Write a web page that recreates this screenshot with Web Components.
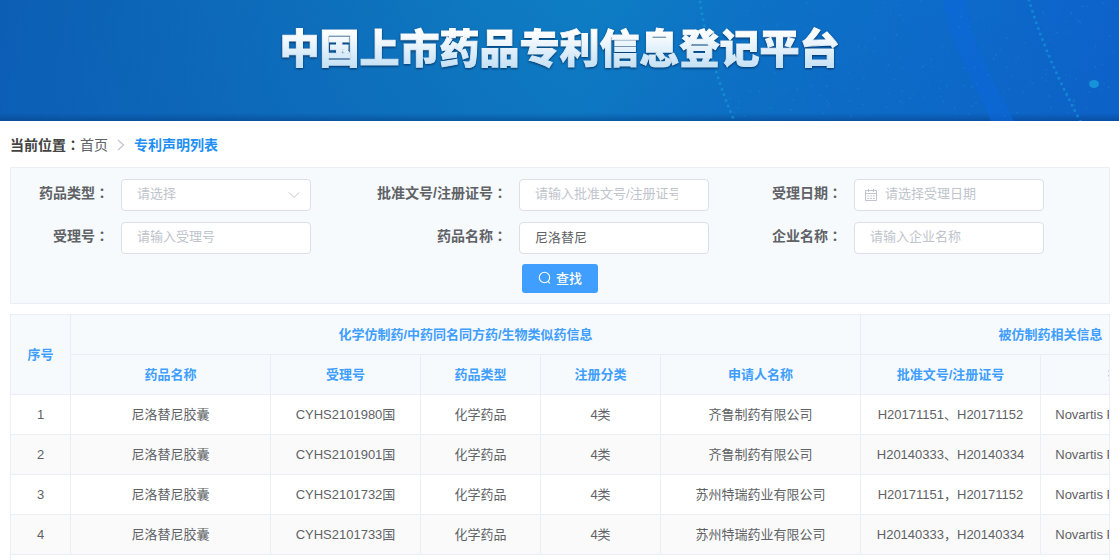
<!DOCTYPE html>
<html lang="zh-CN">
<head>
<meta charset="utf-8">
<title>中国上市药品专利信息登记平台</title>
<style>
  body {
    margin: 0;
    background: #fff;
    color: #606266;
    font-family: "Liberation Sans", "Noto Sans CJK SC", sans-serif;
    font-size: 13px;
  }
</style>
</head>
<body>
<patent-page></patent-page>

<script>
const define = (name, html, setup) => {
  const template = document.createElement('template');
  template.innerHTML = html.trim();
  customElements.define(name, class extends HTMLElement {
    constructor() {
      super();
      this.attachShadow({ mode: 'open' }).append(template.content.cloneNode(true));
    }
    connectedCallback() {
      if (setup && !this.ready) { this.ready = true; setup(this, this.shadowRoot); }
    }
  });
};

// Full-width colon, centred in its em box
define('wide-colon', `
  <style>:host { display: inline; font-family: "Noto Sans CJK TC", sans-serif; line-height: 1; }</style><span lang="zh-TW">：</span>`);

define('site-banner', `
  <style>
    :host {
      display: flex; justify-content: center; position: relative; overflow: hidden;
      height: 121px; flex: none;
      background:
        linear-gradient(to top, rgba(5,60,130,.5), rgba(5,60,130,0) 8px),
        linear-gradient(to bottom, rgba(12,100,185,0), rgba(12,95,185,.22)),
        linear-gradient(98deg, #0c5eb4 0%, #0d6bba 22%, #0e78c0 42%, #0e7dc4 52%, #0d71c6 68%, #0d6aca 85%, #0d62cb 100%);
    }
    svg { position: absolute; inset: 0; width: 100%; height: 100%; }
    h1 {
      margin: 0; padding-top: 16px; position: relative;
      font: 900 40px/60px "Noto Sans CJK SC", sans-serif;
      white-space: nowrap; height: 60px;
      color: transparent; -webkit-text-stroke: 1px transparent;
      background: linear-gradient(#fff 30px, #f5fafe 38px, #c3e0f4 68px);
      -webkit-background-clip: text; background-clip: text;
      filter: drop-shadow(0 1px 1px rgba(0,35,75,.8));
    }
  </style>
  <svg viewBox="0 0 1119 121" preserveAspectRatio="xMidYMid slice" aria-hidden="true">
    <path d="M943 0H965C971 44 996 85 1014 121H991C974 82 949 40 943 0Z" fill="#0c68da" opacity=".6"/>
    <g fill="none" stroke="#18a0dc" stroke-width="3" stroke-linecap="round" opacity=".55">
      <path d="M700 2Q710 65 736 125" stroke-dasharray="0 6"/>
      <path d="M1029 0Q1046 58 1083 126" stroke-dasharray="0 6"/>
    </g>
    <ellipse cx="1094" cy="84" rx="5" ry="4" fill="#179bdc" opacity=".85"/>
    <g id="specks" fill="#2a9ae4"></g>
  </svg>
  <h1><slot></slot></h1>`,
(host, root) => {
  // Faint star dust over the right half of the banner
  let seed = 7, dots = '';
  const next = () => (seed = seed * 16807 % 2147483647) / 2147483647;
  for (let i = 0; i < 260; i++) {
    const x = 730 + next() * 389, y = next() * 118;
    dots += `<circle cx="${x.toFixed(1)}" cy="${y.toFixed(1)}" r="1" opacity="${(0.06 + next() * 0.2).toFixed(2)}"/>`;
  }
  root.getElementById('specks').innerHTML = dots;
});

define('bread-crumb', `
  <style>
    :host { display: flex; align-items: center; font-size: 14px; line-height: 20px; padding: 14px 0 12px; }
    b { color: #444; }
    a { color: inherit; text-decoration: none; }
    a[aria-current] { color: #1e90f5; font-weight: 700; }
    svg { width: 8px; height: 12px; margin: 0 9px; }
  </style>
  <b>当前位置<wide-colon></wide-colon></b>
  <a href="#">首页</a>
  <svg viewBox="0 0 8 12" fill="none" stroke="#c0c4cc" stroke-width="1.2" aria-hidden="true"><path d="M1 1L6.500 6L1 11"/></svg>
  <a href="#" aria-current="page">专利声明列表</a>`);

define('form-field', `
  <style>
    :host { display: flex; align-items: center; }
    label {
      flex: none; box-sizing: border-box; width: var(--label-width, 110px); padding: 0 12px 4px 0;
      text-align: right; font-size: 14px; font-weight: 700; line-height: 28px; white-space: nowrap;
    }
    .box { position: relative; flex: none; width: 190px; }
    input, select {
      display: block; box-sizing: border-box; width: 100%; height: 32px; margin: 0;
      padding: 0 30px 3px 15px; border: 1px solid #dcdfe6; border-radius: 4px;
      background: #fff; color: #606266; font: inherit; font-size: 13px; outline: none; appearance: none;
    }
    select { color: #c0c4cc; }
    input::placeholder { color: #c0c4cc; opacity: 1; }
    .date input { padding-left: 30px; }
    svg { position: absolute; top: 0; bottom: 0; margin: auto 0; pointer-events: none; fill: none; stroke: #c0c4cc; }
    .arrow { right: 11px; width: 12px; height: 8px; }
    .calendar { left: 11px; width: 12px; height: 12px; }
  </style>
  <label for="control"></label>
  <div class="box"></div>`,
(host, root) => {
  const kind = host.getAttribute('kind') || 'text';
  const hint = host.getAttribute('hint') || '';
  const label = root.querySelector('label');
  label.append(host.getAttribute('label'), document.createElement('wide-colon'));
  const box = root.querySelector('.box');
  box.classList.add(kind);
  box.innerHTML = kind === 'select'
    ? `<select id="control"><option>${hint}</option></select>
       <svg class="arrow" viewBox="0 0 12 8"><path d="M1 1.500L6 6.500L11 1.500"/></svg>`
    : `<input id="control" type="text" placeholder="${hint}" value="${host.getAttribute('value') || ''}">`;
  if (kind === 'date') box.insertAdjacentHTML('beforeend',
    `<svg class="calendar" viewBox="0 0 12 12">
       <path d="M.5 1.500H11.500V11.500H.5ZM.5 4.500H11.500M3.500 0V3M8.500 0V3"/>
       <path d="M2.500 7H10M2.500 9.500H10" stroke-dasharray="1.800 .9"/>
     </svg>`);
});

define('search-panel', `
  <style>
    :host { display: block; border: 1px solid #ebeef5; background: #f6fafd; padding: 11px 0 10px; }
    form { display: grid; grid-template-columns: repeat(3, 1fr); row-gap: 11px; margin: 0; }
    .middle { --label-width: 142px; }
    .last { --label-width: 111px; }
    footer { display: flex; justify-content: center; padding-top: 10px; }
    button {
      display: flex; align-items: center; justify-content: center; gap: 5px;
      width: 76px; height: 29px; padding: 0 0 2px; border: 0; border-radius: 3px;
      background: #409eff; color: #fff; font: inherit; font-size: 13px; font-weight: 500;
    }
    svg { width: 13px; height: 13px; fill: none; stroke: #fff; stroke-width: 1.1; }
  </style>
  <form id="search">
    <form-field kind="select" label="药品类型" hint="请选择"></form-field>
    <form-field class="middle" label="批准文号/注册证号" hint="请输入批准文号/注册证号"></form-field>
    <form-field class="last" kind="date" label="受理日期" hint="请选择受理日期"></form-field>
    <form-field label="受理号" hint="请输入受理号"></form-field>
    <form-field class="middle" label="药品名称" hint="请输入药品名称" value="尼洛替尼"></form-field>
    <form-field class="last" label="企业名称" hint="请输入企业名称"></form-field>
  </form>
  <footer>
    <button type="button">
      <svg viewBox="0 0 13 13" aria-hidden="true"><circle cx="6.500" cy="6.500" r="5.200"/><path d="M10 10.300L12 12.500"/></svg>查找
    </button>
  </footer>`);

define('patent-table', `
  <style>
    :host { display: block; overflow: hidden; border: 1px solid #ebeef5; border-bottom: 0; }
    table { table-layout: fixed; width: 1230px; border-collapse: separate; border-spacing: 0; }
    .no { width: 60px; } .wide { width: 200px; } .code { width: 150px; } .kind { width: 120px; } .licence { width: 180px; }
    th, td {
      box-sizing: border-box; height: 40px; padding: 0 10px 1px; text-align: center; white-space: nowrap;
      border-right: 1px solid #ebeef5; border-bottom: 1px solid #ebeef5; line-height: 23px;
    }
    th { background: #f6fafd; color: #409eff; font-weight: 700; }
    tbody tr:nth-child(even) { background: #fafafa; }
  </style>
  <table>
    <colgroup><col class="no"><col class="wide"><col class="code"><col class="kind"><col class="kind"><col class="wide"><col class="licence"><col class="wide"></colgroup>
    <thead>
      <tr><th rowspan="2">序号</th><th colspan="5">化学仿制药/中药同名同方药/生物类似药信息</th><th colspan="2">被仿制药相关信息</th></tr>
      <tr><th>药品名称</th><th>受理号</th><th>药品类型</th><th>注册分类</th><th>申请人名称</th><th>批准文号/注册证号</th><th>持有人名称</th></tr>
    </thead>
    <tbody></tbody>
  </table>`,
(host, root) => {
  const rows = [
    ['CYHS2101980国', '齐鲁制药有限公司', 'H20171151、H20171152'],
    ['CYHS2101901国', '齐鲁制药有限公司', 'H20140333、H20140334'],
    ['CYHS2101732国', '苏州特瑞药业有限公司', 'H20171151，H20171152'],
    ['CYHS2101733国', '苏州特瑞药业有限公司', 'H20140333，H20140334'],
  ];
  root.querySelector('tbody').innerHTML = rows.map(([code, applicant, licence], i) =>
    '<tr>' + [i + 1, '尼洛替尼胶囊', code, '化学药品', '4类', applicant, licence, 'Novartis Pharma Schweiz AG']
      .map(text => `<td>${text}</td>`).join('') + '</tr>').join('');
});

define('patent-page', `
  <style>
    :host { display: flex; flex-direction: column; min-height: 100vh; }
    main { flex: 1; display: flex; flex-direction: column; padding: 0 9px 0 10px; }
    patent-table { flex: 1; margin-top: 10px; }
  </style>
  <site-banner>中国上市药品专利信息登记平台</site-banner>
  <main>
    <bread-crumb></bread-crumb>
    <search-panel></search-panel>
    <patent-table></patent-table>
  </main>`);
</script>
</body>
</html>
